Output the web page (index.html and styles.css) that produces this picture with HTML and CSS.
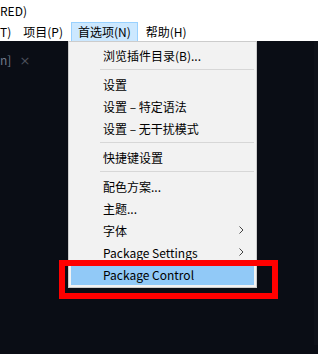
FILE: index.html
```html
<!doctype html>
<html>
<head>
    <meta charset="utf-8">
    <title>首选项</title>
    <link rel="stylesheet" href="styles.css">
</head>

<body>
    <div id="titlebar">RED)</div>

    <!-- menu bar -->
    <div id="menubar">
        <div class="menubar-item first">T)</div>
        <div class="menubar-item">项目(P)</div>
        <div class="menubar-item open">首选项(N)</div>
        <div class="menubar-item">帮助(H)</div>
    </div>

    <div id="editor">
        <div class="editor-main">
            <div class="tab"><span class="tab-name">n]</span><span class="tab-close">×</span></div>
        </div>
        <div class="minimap"></div>
    </div>

    <!-- dropdown of 首选项 -->
    <div id="dropdown">
        <div class="item">浏览插件目录(B)...</div>
        <div class="separator"></div>
        <div class="item">设置</div>
        <div class="item">设置 – 特定语法</div>
        <div class="item">设置 – 无干扰模式</div>
        <div class="separator"></div>
        <div class="item">快捷键设置</div>
        <div class="separator"></div>
        <div class="item">配色方案...</div>
        <div class="item">主题...</div>
        <div class="item submenu">字体
            <svg class="arrow" width="5" height="8" viewBox="0 0 5 8"><path d="M0.5 0.5 L4 4 L0.5 7.5" fill="none" stroke="#444" stroke-width="1"/></svg>
        </div>
        <div class="item submenu">Package Settings
            <svg class="arrow" width="5" height="8" viewBox="0 0 5 8"><path d="M0.5 0.5 L4 4 L0.5 7.5" fill="none" stroke="#444" stroke-width="1"/></svg>
        </div>
        <div class="item selected">Package Control</div>
    </div>

    <div id="mark"></div>
</body>
</html>
```

FILE: styles.css
```css
html, body {
    margin: 0;
    height: 100%;
    overflow: hidden;
    background-color: #0a0d15;
    font-family: "Noto Sans CJK SC", "Noto Sans", sans-serif;
    font-size: 12px;
    color: #000;
}

#titlebar {
    height: 22px;
    line-height: 22px;
    background-color: #fff;
}

#menubar {
    display: flex;
    height: 19px;
    background-color: #fff;
}

.menubar-item {
    padding: 0 7px;
    line-height: 17px;
    border: 1px solid transparent;
    border-bottom: 0;
}

.menubar-item.first {
    padding: 0 3px 0 0;
    border-left: 0;
}

.menubar-item.open {
    padding: 0 6px;
    background-color: #cce8ff;
    border-color: #99d1ff;
}

#editor {
    display: flex;
    height: 304px;
}

.editor-main {
    flex: 1;
}

.minimap {
    width: 4px;
    background-color: #0e1119;
}

.tab {
    padding-top: 11px;
    line-height: 16px;
}

.tab-name {
    color: #707a8a;
}

.tab-close {
    color: #4a505b;
    margin-left: 8px;
    font-family: "DejaVu Sans", sans-serif;
    font-size: 13px;
}

#dropdown {
    position: absolute;
    left: 68px;
    top: 41px;
    width: 187px;
    padding: 2px 0;
    background-color: #f2f2f2;
    border: 1px solid #cccccc;
}

.item {
    display: flex;
    align-items: center;
    height: 22px;
    margin: 0 2px;
    padding: 0 10px 0 32px;
    white-space: nowrap;
}

.item.submenu {
    justify-content: space-between;
}

.item.selected {
    background-color: #91c9f7;
}

.separator {
    height: 1px;
    margin: 3px 2px 3px 31px;
    background-color: #d7d7d7;
}

#mark {
    position: absolute;
    left: 59px;
    top: 260px;
    width: 219px;
    height: 39px;
    box-sizing: border-box;
    border: 6px solid #ff0000;
}
```
